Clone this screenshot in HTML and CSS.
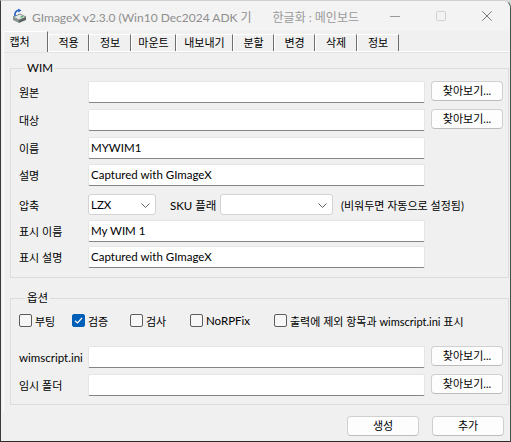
FILE: index.html
```html
<!DOCTYPE html>
<html lang="ko">
<head>
<meta charset="utf-8">
<title>GImageX</title>
<link rel="stylesheet" href="styles.css">
</head>
<body>
<div class="window">
  <div class="titlebar">
    <svg class="appicon" width="16" height="16" viewBox="0 0 16 16">
      <path d="M2 9 L9 6 L15 9 L8 12 Z" fill="#dfe8e4" stroke="#6b7470" stroke-width="0.8"/>
      <path d="M2 9 L8 12 L8 15 L2 12 Z" fill="#8a9290"/>
      <path d="M8 12 L15 9 L15 12 L8 15 Z" fill="#5d6563"/>
      <rect x="9.5" y="8.2" width="2.5" height="1.2" fill="#3aa04a" transform="rotate(-25 10.7 8.8)"/>
      <path d="M4 8 C3.5 4.5 5 2.5 8 2.3" fill="none" stroke="#2b62c8" stroke-width="1.6"/>
      <path d="M7.2 0.5 L10.5 2.4 L7.4 4.4 Z" fill="#2b62c8"/>
    </svg>
    <span class="title">GImageX v2.3.0 (Win10 Dec2024 ADK 기</span>
    <span class="title-ko">한글화 : 메인보드</span>
    <div class="caption">
      <span class="cbtn"><svg width="10" height="10" viewBox="0 0 10 10"><path d="M0 5.5 H10" stroke="#9a9a9a" stroke-width="1"/></svg></span>
      <span class="cbtn"><svg width="10" height="10" viewBox="0 0 10 10"><rect x="0.5" y="0.5" width="9" height="9" rx="1" fill="none" stroke="#cfcfcf" stroke-width="1"/></svg></span>
      <span class="cbtn"><svg width="10" height="10" viewBox="0 0 10 10"><path d="M0.3 0.3 L9.7 9.7 M9.7 0.3 L0.3 9.7" stroke="#7a7a7a" stroke-width="1"/></svg></span>
    </div>
  </div>

  <div class="tabs">
    <div class="tab active">캡처</div>
    <div class="tab">적용</div>
    <div class="tab w42">정보</div>
    <div class="tab w45">마운트</div>
    <div class="tab w57">내보내기</div>
    <div class="tab">분할</div>
    <div class="tab">변경</div>
    <div class="tab w42">삭제</div>
    <div class="tab w42">정보</div>
  </div>

  <div class="panel">
    <fieldset class="group wim">
      <legend>WIM</legend>
      <div class="row r-src"><span class="lbl">원본</span><div class="edit"></div><div class="btn">찾아보기...</div></div>
      <div class="row r-dst"><span class="lbl">대상</span><div class="edit"></div><div class="btn">찾아보기...</div></div>
      <div class="row r-name"><span class="lbl">이름</span><div class="edit">MYWIM1</div></div>
      <div class="row r-desc"><span class="lbl">설명</span><div class="edit">Captured with GImageX</div></div>
      <div class="row r-comp">
        <span class="lbl">압축</span>
        <div class="combo small">LZX<svg class="chev" width="9" height="5" viewBox="0 0 9 5"><path d="M0.5 0.5 L4.5 4.5 L8.5 0.5" fill="none" stroke="#606060" stroke-width="1"/></svg></div>
        <span class="sku">SKU 플래</span>
        <div class="combo wide"><svg class="chev" width="9" height="5" viewBox="0 0 9 5"><path d="M0.5 0.5 L4.5 4.5 L8.5 0.5" fill="none" stroke="#606060" stroke-width="1"/></svg></div>
        <span class="note">(비워두면 자동으로 설정됨)</span>
      </div>
      <div class="row r-dname"><span class="lbl">표시 이름</span><div class="edit">My WIM 1</div></div>
      <div class="row r-ddesc"><span class="lbl">표시 설명</span><div class="edit">Captured with GImageX</div></div>
    </fieldset>

    <fieldset class="group opts">
      <legend>옵션</legend>
      <div class="checks">
        <span class="chk c1"><span class="box"></span><span>부팅</span></span>
        <span class="chk c2"><span class="box on"><svg width="11" height="11" viewBox="0 0 11 11"><path d="M2 5.8 L4.4 8 L9 3" fill="none" stroke="#fff" stroke-width="1.2"/></svg></span><span>검증</span></span>
        <span class="chk c3"><span class="box"></span><span>검사</span></span>
        <span class="chk c4"><span class="box"></span><span>NoRPFix</span></span>
        <span class="chk c5"><span class="box"></span><span>출력에 제외 항목과 wimscript.ini 표시</span></span>
      </div>
      <div class="row r-ini"><span class="lbl">wimscript.ini</span><div class="edit"></div><div class="btn">찾아보기...</div></div>
      <div class="row r-tmp"><span class="lbl">임시 폴더</span><div class="edit"></div><div class="btn">찾아보기...</div></div>
    </fieldset>
  </div>

  <div class="footer">
    <div class="btn">생성</div>
    <div class="btn">추가</div>
  </div>
</div>
</body>
</html>
```

FILE: styles.css
```css
* { box-sizing: border-box; }
html, body { margin: 0; padding: 0; }
body {
  width: 511px;
  height: 442px;
  overflow: hidden;
  background: #d8dcda;
  font-family: "Lato", "Noto Sans CJK KR", sans-serif;
  font-size: 11px;
  color: #000;
}
.window {
  width: 511px;
  height: 442px;
  background: #f0f0f0;
  border-left: 1px solid #3b3b3b;
  border-right: 1px solid #46524e;
  border-bottom: 1px solid #2a2a2a;
  border-top: 1px solid #cfcfcf;
  border-top-right-radius: 8px;
  display: flex;
  flex-direction: column;
  overflow: hidden;
}

/* title bar */
.titlebar {
  height: 30px;
  flex: none;
  display: flex;
  align-items: center;
  background: #f3f3f3;
}
.appicon { margin-left: 10px; flex: none; }
.title {
  margin-left: 5px;
  font-size: 12px;
  color: #8f8f8f;
  white-space: nowrap;
}
.title-ko {
  margin-left: auto;
  margin-right: 13px;
  font-size: 12px;
  color: #9a9a9a;
  white-space: nowrap;
}
.caption { display: flex; flex: none; }
.cbtn {
  width: 46px;
  height: 30px;
  display: flex;
  align-items: center;
  justify-content: center;
}

/* tabs */
.tabs {
  height: 20px;
  flex: none;
  display: flex;
  align-items: flex-end;
  margin-left: 2px;
  position: relative;
  z-index: 1;
}
.tab {
  width: 41px;
  height: 17px;
  line-height: 16px;
  text-align: center;
  background: #f0f0f0;
  border-top: 1px solid #ffffff;
  border-left: 1px solid #ffffff;
  border-right: 1px solid #6e6e6e;
  white-space: nowrap;
}
.tab.w42 { width: 42px; }
.tab.w45 { width: 45px; }
.tab.w57 { width: 57px; }
.tab.active {
  width: 45px;
  height: 21px;
  margin-bottom: -1px;
  padding-right: 12px;
  line-height: 19px;
}

/* panel */
.panel {
  flex: none;
  margin-left: 2px;
  height: 360px;
  border-top: 1px solid #ffffff;
  border-left: 1px solid #ffffff;
  box-shadow: inset 0 1px 0 #e3e3e3;
  padding: 0 0 0 6px;
}
.group {
  margin: 0;
  padding: 6px 0 9px 8px;
  border: 1px solid #dcdcdc;
  width: 499px;
}
.group legend {
  padding: 0 2px;
  margin-left: 6px;
  line-height: 14px;
  font-size: 11.5px;
}
.wim { margin-top: 9px; }
.opts { margin-top: 13px; padding-top: 9px; padding-bottom: 8px; }

.row {
  display: flex;
  align-items: center;
  height: 22px;
}
.lbl { width: 69px; flex: none; white-space: nowrap; }
.edit {
  width: 337px;
  height: 22px;
  flex: none;
  background: #ffffff;
  border: 1px solid #e5e5e5;
  border-bottom: 1px solid #858585;
  border-radius: 2px;
  padding: 0 2px;
  line-height: 20px;
  font-size: 11.5px;
  white-space: nowrap;
}
.btn {
  width: 72px;
  height: 20px;
  flex: none;
  background: #fdfdfd;
  border: 1px solid #d0d0d0;
  border-bottom-color: #bdbdbd;
  border-radius: 4px;
  text-align: center;
  line-height: 18px;
  white-space: nowrap;
}
.row .btn { margin-left: 6px; align-self: flex-start; }

.r-dst { margin-top: 6px; }
.r-name { margin-top: 6px; }
.r-desc { margin-top: 5px; }
.r-comp { margin-top: 8px; height: 21px; }
.r-dname { margin-top: 5px; }
.r-ddesc { margin-top: 4px; }

.combo {
  height: 21px;
  flex: none;
  background: #ffffff;
  border: 1px solid #d3d3d3;
  border-radius: 3px;
  position: relative;
  padding-left: 2px;
  line-height: 19px;
  font-size: 11.5px;
}
.combo.small { width: 68px; }
.combo.wide { width: 113px; }
.chev { position: absolute; right: 5px; top: 8px; }
.sku { width: 50px; margin-left: 14px; flex: none; white-space: nowrap; font-size: 11.5px; }
.note { margin-left: 8px; white-space: nowrap; }

/* checkboxes */
.checks {
  display: flex;
  align-items: center;
  height: 13px;
}
.chk { display: flex; align-items: center; white-space: nowrap; flex: none; font-size: 11px; }
.c1 { width: 53px; }
.c2 { width: 58px; }
.c3 { width: 60px; }
.c4 { width: 84px; }
.c4 span:last-child { font-size: 11.5px; }
.box {
  width: 13px;
  height: 13px;
  border: 1px solid #5c5c5c;
  border-radius: 2px;
  background: #f7f7f7;
  margin-right: 3px;
  flex: none;
  display: flex;
  align-items: center;
  justify-content: center;
}
.box.on { background: #005fb8; border-color: #005fb8; }
.r-ini { margin-top: 19px; }
.r-ini .lbl { font-size: 11.5px; }
.r-tmp { margin-top: 6px; }

/* footer */
.footer {
  display: flex;
  justify-content: flex-end;
  gap: 13px;
  padding-right: 6px;
  margin-top: 5px;
}
```
